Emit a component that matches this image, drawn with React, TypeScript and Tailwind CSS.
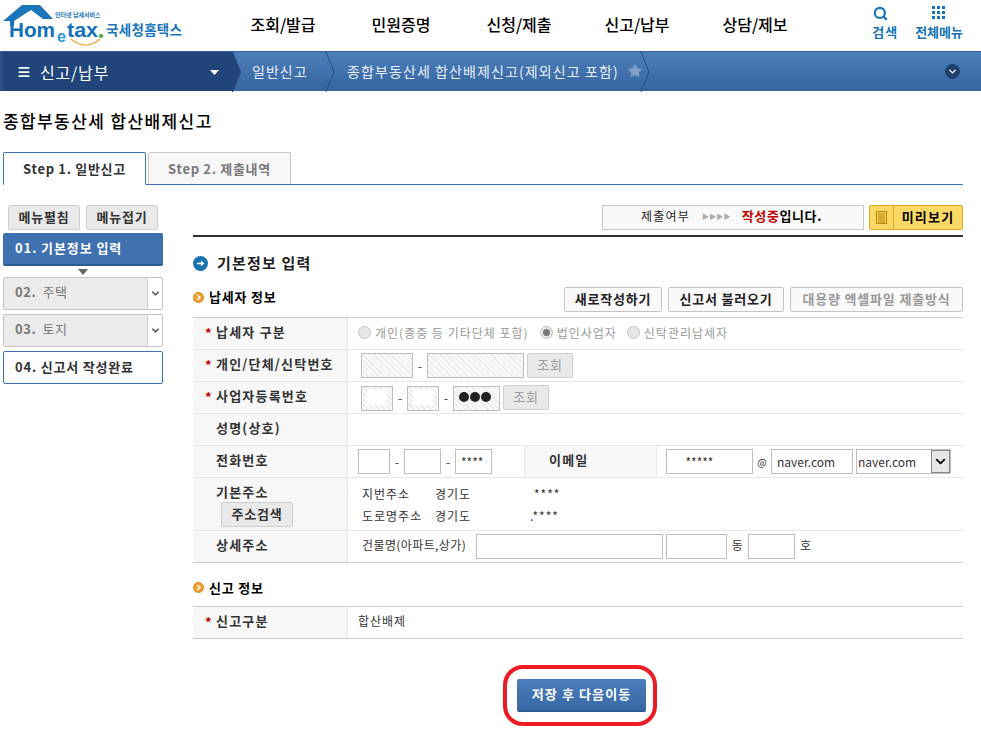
import type { ReactNode } from "react";
import { ChevronDown, Menu, Search, Star } from "lucide-react";

const font = { fontFamily: '"Noto Sans CJK KR", "Noto Sans", sans-serif' };
const latin = { fontFamily: '"Liberation Sans", sans-serif' };

const menus = ["조회/발급", "민원증명", "신청/제출", "신고/납부", "상담/제보"];

const Logo = () => (
  <svg width="190" height="48" viewBox="0 0 190 48">
    <polygon points="3,20 22,4 40,4 53,18 43,18 31,9 14,20" fill="#1b75bb" />
    <rect x="10" y="19" width="4" height="6" fill="#1b75bb" />
    <text x="55" y="16" fontSize="6" fill="#1b75bb" fontWeight="700" style={font}>인터넷 납세서비스</text>
    <text x="9" y="36" fontSize="21" fontWeight="700" fill="#1470b8" textLength="46" lengthAdjust="spacingAndGlyphs" style={latin}>Hom</text>
    <text x="57" y="41" fontSize="16" fontWeight="700" fill="#2b96d4" style={latin}>e</text>
    <text x="67" y="36" fontSize="21" fontWeight="700" fill="#1470b8" textLength="31" lengthAdjust="spacingAndGlyphs" style={latin}>tax</text>
    <circle cx="101" cy="35" r="2" fill="#3aa935" />
    <path d="M71 38 Q86 50 100 38" fill="none" stroke="#f0a030" strokeWidth="1.2" />
    <text x="106" y="34" fontSize="13.5" fontWeight="700" fill="#1b75bb" textLength="76" style={font}>국세청홈택스</text>
  </svg>
);

const Chevron = ({ className }: { className: string }) => (
  <svg className={className} width="11" height="40" viewBox="0 0 11 40">
    <path d="M1 0 L9 20 L1 40" fill="none" stroke="#23507f" strokeWidth="1" />
  </svg>
);

const Bullet = () => (
  <span className="w-[11px] h-[11px] rounded-full bg-[#f0a030] border border-[#e08a18] flex items-center justify-center mr-[5px]">
    <svg width="7" height="7" viewBox="0 0 7 7">
      <path d="M2 1 L5 3.5 L2 6" fill="none" stroke="#fff" strokeWidth="1.5" />
    </svg>
  </span>
);

const GrayBtn = ({ children, className }: { children: ReactNode; className: string }) => (
  <button className={`h-[25px] pb-[2px] bg-[#e9e9e9] border border-[#cfcfcf] rounded-[2px] text-[13px] leading-none tracking-[0.8px] ${className}`}>
    {children}
  </button>
);

const Row = ({ label, req, h, last, children }: { label: ReactNode; req?: boolean; h: string; last?: boolean; children: ReactNode }) => (
  <div className={`flex border-b ${h} ${last ? "border-[#cccccc]" : "border-[#e8e8e8]"}`}>
    <div className="w-[155px] shrink-0 pb-[3px] bg-[#f7f7f7] border-r border-[#e8e8e8] flex items-center text-[13px] font-bold text-[#333] tracking-[1.2px]">
      <span className="w-[11px] ml-[12px] text-[#c00000] text-[13px] leading-none">{req ? "*" : ""}</span>
      {label}
    </div>
    {children}
  </div>
);

const Box = ({ w, value, hatch }: { w: string; value?: string; hatch?: boolean }) => (
  <input
    readOnly
    value={value ?? ""}
    className={`h-[25px] ${w} border border-[#bdbdbd] text-[12px] text-[#333] px-[5px] outline-none ${hatch ? "bg-[repeating-linear-gradient(45deg,#e9e9e9_0px,#e9e9e9_1px,#f9f9f9_1px,#f9f9f9_4px)]" : "bg-white"}`}
  />
);

const Radio = ({ on }: { on?: boolean }) => (
  <span className="w-[13px] h-[13px] rounded-full bg-[#e6e6e6] border border-[#c4c4c4] flex items-center justify-center mr-[4px]">
    {on && <span className="w-[7px] h-[7px] rounded-full bg-[#777]" />}
  </span>
);

const Dash = ({ w }: { w: string }) => <span className={`${w} text-center text-[13px] text-[#555]`}>-</span>;

const SideItem = ({ text }: { text: string }) => (
  <div className="h-[33px] flex border border-[#c4c4c4] rounded-[2px]">
    <div className="flex-1 pb-[3px] bg-[#ebebeb] border-r border-[#d0d0d0] flex items-center pl-[11px] text-[13px] text-[#777] tracking-[0.6px]">
      <span className="font-bold mr-[6px]">{text.slice(0, 3)}</span>
      {text.slice(4)}
    </div>
    <div className="w-[14px] flex items-center justify-center">
      <ChevronDown size={11} strokeWidth={3.5} className="text-[#666]" />
    </div>
  </div>
);

export default function App() {
  return (
    <div className="w-[981px] h-[736px] bg-white overflow-hidden text-[#333]" style={font}>
      {/* top header */}
      <header className="h-[51px] flex">
        <div className="w-[224px] pt-[1px]">
          <Logo />
        </div>
        <nav className="flex">
          {menus.map((m) => (
            <a key={m} className="w-[118px] pb-[3px] flex items-center justify-center text-[16px] font-medium text-black">
              {m}
            </a>
          ))}
        </nav>
        <div className="ml-auto flex text-[#1673b5] text-[13px] font-bold pr-[18px] pt-[6px]">
          <div className="flex flex-col items-center mr-[17px]">
            <Search size={15} strokeWidth={3.5} className="mr-[9px]" />
            <span className="mt-[2px] leading-[18px] tracking-[1px]">검색</span>
          </div>
          <div className="flex flex-col items-center">
            <svg width="14" height="14" viewBox="0 0 14 14" fill="#1673b5">
              {[0, 5, 10].map((y) =>
                [0, 5, 10].map((x) => <rect key={`${x}-${y}`} x={x} y={y} width="3" height="3" />),
              )}
            </svg>
            <span className="mt-[3px] leading-[18px]">전체메뉴</span>
          </div>
        </div>
      </header>

      {/* breadcrumb bar */}
      <div className="h-[40px] flex items-center border-t border-[#36618f] bg-gradient-to-b from-[#4c7fba] to-[#36659f] text-white">
        <div className="relative h-full w-[232px] bg-[#21457a] flex items-center pl-[14px] border-l-[3px] border-[#2b5286]">
          <Menu size={14} strokeWidth={3} className="mr-[9px]" />
          <span className="text-[16px] tracking-[0.8px]">신고/납부</span>
          <svg className="absolute left-[207px] top-[18px]" width="9" height="5" viewBox="0 0 9 5" fill="#fff">
            <polygon points="0,0 9,0 4.5,5" />
          </svg>
          <svg className="absolute left-[229px] top-0" width="10" height="40" viewBox="0 0 10 40" fill="#21457a">
            <polygon points="0,0 1,0 9,20 1,40 0,40" />
          </svg>
        </div>
        <div className="relative w-[95px] h-full flex items-center pl-[20px] text-[14px] tracking-[1px] text-[#e5eef8]">
          일반신고
          <Chevron className="absolute right-[-9px] top-0" />
        </div>
        <div className="relative w-[314px] h-full flex items-center pl-[20px] text-[14px] tracking-[1.1px] text-[#e5eef8]">
          종합부동산세 합산배제신고(제외신고 포함)
          <Star size={14} fill="#7f9fc6" stroke="#7f9fc6" className="absolute left-[301px] top-[12px]" />
          <Chevron className="absolute right-[-10px] top-0" />
        </div>
        <span className="ml-auto mr-[21px] w-[15px] h-[15px] rounded-full bg-[#21406e] flex items-center justify-center">
          <ChevronDown size={11} strokeWidth={3} />
        </span>
      </div>

      <h1 className="h-[61px] flex items-center pl-[3px] pb-[1px] text-[17px] font-medium text-black tracking-[1.4px]">
        종합부동산세 합산배제신고
      </h1>

      {/* tabs */}
      <div className="ml-[3px] w-[960px] h-[33px] flex items-end border-b border-[#3d72b4]">
        <div className="w-[143px] h-[33px] -mb-px bg-white border border-[#3d72b4] border-b-white rounded-t-[2px] flex items-center justify-center text-[13px] font-bold tracking-[0.7px]">
          Step 1. 일반신고
        </div>
        <div className="ml-[2px] w-[143px] h-[32px] bg-[#f7f7f7] border border-[#c8c8c8] border-b-0 rounded-t-[2px] flex items-center justify-center text-[13px] font-bold text-[#777] tracking-[0.7px]">
          Step 2. 제출내역
        </div>
      </div>

      <div className="flex pl-[3px] pt-[20px]">
        {/* left menu */}
        <aside className="w-[160px] flex flex-col">
          <div className="flex gap-[6px] px-[5px]">
            <GrayBtn className="w-[72px] font-bold">메뉴펼침</GrayBtn>
            <GrayBtn className="w-[72px] font-bold">메뉴접기</GrayBtn>
          </div>
          <div className="mt-[3px] h-[33px] pb-[1px] rounded-[2px] border-b-2 border-[#2c5a94] bg-[#3f70b0] flex items-center pl-[12px] text-[13px] font-bold text-white tracking-[0.9px]">
            01. 기본정보 입력
          </div>
          <div className="h-[11px] flex justify-center items-center">
            <svg width="10" height="6" viewBox="0 0 10 6" fill="#666">
              <polygon points="0,0 10,0 5,6" />
            </svg>
          </div>
          <div className="flex flex-col gap-[4px]">
            <SideItem text="02. 주택" />
            <SideItem text="03. 토지" />
            <div className="h-[33px] pb-[2px] border border-[#3d72b4] rounded-[2px] flex items-center pl-[11px] text-[13px] font-bold tracking-[0.8px]">
              04. 신고서 작성완료
            </div>
          </div>
        </aside>

        {/* main form */}
        <main className="ml-[30px] w-[770px]">
          <div className="h-[32px] flex justify-end items-start border-b-2 border-[#333]">
            <div className="w-[262px] h-[25px] pb-[3px] bg-[#f9f9f9] border border-[#c8c8c8] flex items-center pl-[38px] text-[12px] text-[#222]">
              <span className="tracking-[1.2px]">제출여부</span>
              <span className="ml-[12px] mr-[11px] text-[7px] tracking-[0.2px] text-[#aaa]">▶▶▶▶</span>
              <b className="text-[13px] text-[#c00000] tracking-[0.6px]">작성중</b>
              <b className="text-[13px] text-black tracking-[0.6px]">입니다.</b>
            </div>
            <div className="ml-[5px] w-[94px] h-[25px] flex bg-[#fcd964] border border-[#e5a92a] rounded-[2px]">
              <div className="w-[24px] border-r border-[#e5a92a] flex items-center justify-center">
                <svg width="11" height="13" viewBox="0 0 11 13">
                  <rect x="0.5" y="0.5" width="10" height="12" fill="#f6cd50" stroke="#b48a10" />
                  <path d="M2 3H9M2 5H9M2 7H9M2 9H9M2 11H9" stroke="#b48a10" strokeWidth="1" />
                </svg>
              </div>
              <div className="flex-1 pb-[2px] flex items-center justify-center text-[13px] font-bold text-black tracking-[1.2px]">미리보기</div>
            </div>
          </div>

          <div className="h-[50px] flex items-center pt-[3px] text-[15px] font-bold text-[#222] tracking-[1.2px]">
            <span className="w-[15px] h-[15px] rounded-full bg-[#1a72b2] flex items-center justify-center mr-[9px]">
              <svg width="9" height="9" viewBox="0 0 9 9">
                <path d="M1 4.5H7M5 2.5L7.5 4.5L5 6.5" fill="none" stroke="#fff" strokeWidth="1.3" />
              </svg>
            </span>
            기본정보 입력
          </div>

          <div className="h-[30px] flex items-start">
            <div className="h-[20px] flex items-center text-[13px] font-bold text-black tracking-[0.8px]">
              <Bullet />
              납세자 정보
            </div>
            <div className="ml-auto flex gap-[6px] text-[13px] font-bold">
              <button className="w-[98px] h-[25px] pb-[2px] bg-[#f9f9f9] border border-[#c4c4c4] rounded-[2px] text-[#222] tracking-[0.8px]">새로작성하기</button>
              <button className="w-[116px] h-[25px] pb-[2px] bg-[#f9f9f9] border border-[#c4c4c4] rounded-[2px] text-[#222] tracking-[0.8px]">신고서 불러오기</button>
              <button className="w-[173px] h-[25px] pb-[2px] bg-[#f9f9f9] border border-[#c4c4c4] rounded-[2px] text-[#999] tracking-[0.8px]">대용량 엑셀파일 제출방식</button>
            </div>
          </div>

          <div className="border-t border-[#cccccc]">
            <Row req label="납세자 구분" h="h-[32px]">
              <div className="flex items-center pl-[10px] pb-[2px] text-[12px] text-[#999] tracking-[1px]">
                <Radio />
                개인(종중 등 기타단체 포함)
                <span className="w-[11px]" />
                <Radio on />
                법인사업자
                <span className="w-[10px]" />
                <Radio />
                신탁관리납세자
              </div>
            </Row>
            <Row req label="개인/단체/신탁번호" h="h-[32px]">
              <div className="flex items-center pl-[13px]">
                <Box w="w-[52px]" hatch />
                <Dash w="w-[14px]" />
                <Box w="w-[97px]" hatch />
                <GrayBtn className="ml-[3px] w-[46px] text-[#999]">조회</GrayBtn>
              </div>
            </Row>
            <Row req label="사업자등록번호" h="h-[32px]">
              <div className="flex items-center pl-[13px]">
                <div className="relative w-[32px]">
                  <Box w="w-[32px]" hatch />
                  <span className="absolute left-[6px] top-[5px] w-[20px] h-[15px] bg-white" />
                </div>
                <Dash w="w-[14px]" />
                <div className="relative w-[32px]">
                  <Box w="w-[32px]" hatch />
                  <span className="absolute left-[6px] top-[5px] w-[20px] h-[15px] bg-white" />
                </div>
                <Dash w="w-[14px]" />
                <div className="relative w-[47px]">
                  <Box w="w-[47px]" hatch />
                  <span className="absolute left-[6px] top-[7px] flex gap-[1px]">
                    <i className="w-[10px] h-[10px] rounded-full bg-[#222]" />
                    <i className="w-[10px] h-[10px] rounded-full bg-[#222]" />
                    <i className="w-[10px] h-[10px] rounded-full bg-[#222]" />
                  </span>
                </div>
                <GrayBtn className="ml-[3px] w-[46px] text-[#999]">조회</GrayBtn>
              </div>
            </Row>
            <Row label="성명(상호)" h="h-[32px]">
              <div />
            </Row>
            <Row label="전화번호" h="h-[32px]">
              <div className="flex items-center pl-[10px] w-[176px] shrink-0">
                <Box w="w-[32px]" />
                <Dash w="w-[14px]" />
                <Box w="w-[37px]" />
                <Dash w="w-[14px]" />
                <Box w="w-[37px]" value="****" />
              </div>
              <div className="w-[133px] shrink-0 pb-[3px] bg-[#f7f7f7] border-x border-[#e8e8e8] flex items-center pl-[24px] text-[13px] font-bold tracking-[1.2px]">
                이메일
              </div>
              <div className="flex items-center pl-[9px] text-[12px]">
                <Box w="w-[87px]" value="     *****" />
                <span className="w-[18px] text-center text-[10px]">@</span>
                <Box w="w-[82px]" value="naver.com" />
                <div className="ml-[3px] w-[95px] h-[25px] border border-[#bdbdbd] flex items-center justify-between pl-[1px] text-[12px] text-[#333]">
                  naver.com
                  <span className="w-[19px] h-[23px] border border-[#888] bg-[#e6e6e6] flex items-center justify-center">
                    <ChevronDown size={15} strokeWidth={3} className="text-black" />
                  </span>
                </div>
              </div>
            </Row>
            <Row
              label={
                <span className="flex flex-col items-start pt-[4px]">
                  기본주소
                  <GrayBtn className="ml-[5px] mt-[1px] w-[72px] text-[#333] font-bold">주소검색</GrayBtn>
                </span>
              }
              h="h-[53px]"
            >
              <div className="grid grid-cols-[73px_99px_auto] content-center gap-y-[4px] pl-[14px] pt-[1px] text-[12px] leading-[18px] text-[#333] tracking-[1px]">
                <span>지번주소</span>
                <span>경기도</span>
                <span>****</span>
                <span>도로명주소</span>
                <span>경기도</span>
                <span className="-ml-[4px]">.****</span>
              </div>
            </Row>
            <Row last label="상세주소" h="h-[32px]">
              <div className="flex items-center pl-[14px] text-[12px] text-[#333] tracking-[0.4px]">
                <span className="w-[114px] pb-[3px] whitespace-nowrap">건물명(아파트,상가)</span>
                <Box w="w-[187px]" />
                <span className="w-[3px]" />
                <Box w="w-[61px]" />
                <span className="w-[21px] pb-[3px] text-center">동</span>
                <Box w="w-[47px]" />
                <span className="ml-[5px] pb-[3px]">호</span>
              </div>
            </Row>
          </div>

          <div className="h-[43px] pt-[6px] flex items-center text-[13px] font-bold text-black tracking-[0.8px]">
            <Bullet />
            신고 정보
          </div>
          <div className="border-t border-[#cccccc]">
            <Row last req label="신고구분" h="h-[32px]">
              <div className="flex items-center pl-[10px] pb-[4px] text-[12px] text-[#333] tracking-[1px]">합산배제</div>
            </Row>
          </div>

          <div className="flex pt-[26px] pl-[310px]">
            <div className="py-[10px] pl-[10px] pr-[7px] border-4 border-[#ed1c24] rounded-[20px]">
              <button className="block w-[129px] h-[33px] pb-[1px] rounded-[2px] border-b-2 border-[#2c5a94] bg-gradient-to-b from-[#4a7dbc] to-[#3a69a5] text-[13px] font-bold text-white tracking-[1.1px]">
                저장 후 다음이동
              </button>
            </div>
          </div>
        </main>
      </div>
    </div>
  );
}
